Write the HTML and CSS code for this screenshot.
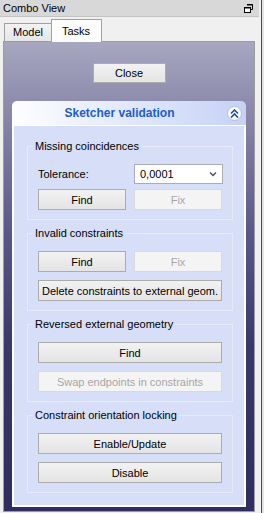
FILE: index.html
```html
<!DOCTYPE html>
<html lang="en">
    <head>
        <meta charset="UTF-8" />
        <title>Combo View</title>
        <link rel="stylesheet" href="styles.css">
    </head>
    <body>

        <div class="dock">
            <div class="dock-title">
                <span>Combo View</span>
                <svg class="float-icon" width="9" height="9" viewBox="0 0 9 9">
                    <path d="M3 0.5 H8.5 V5.5 H6.5" fill="none" stroke="#000" stroke-width="1" />
                    <path d="M3 1 H8.5" stroke="#000" stroke-width="1" />
                    <rect x="0.5" y="3.5" width="6" height="5" fill="#fff" stroke="#000" stroke-width="1" />
                    <path d="M0.5 4 H6.5" stroke="#000" stroke-width="1" />
                </svg>
            </div>

            <div class="tabs">
                <div class="tab">Model</div>
                <div class="tab active">Tasks</div>
            </div>

            <div class="tab-panel">
                <div class="close-row">
                    <button class="btn close-btn">Close</button>
                </div>

                <div class="taskbox">
                    <div class="taskbox-header">
                        <span class="taskbox-title">Sketcher validation</span>
                        <span class="collapse">
                            <svg width="9" height="9" viewBox="0 0 9 9">
                                <path d="M1 4.5 L4.5 1 L8 4.5" fill="none" stroke="#1f4aa6" stroke-width="1.6" />
                                <path d="M1 8.5 L4.5 5 L8 8.5" fill="none" stroke="#1f4aa6" stroke-width="1.6" />
                            </svg>
                        </span>
                    </div>

                    <div class="taskbox-body">
                        <fieldset class="group">
                            <legend>Missing coincidences</legend>
                            <div class="row tolerance-row">
                                <label>Tolerance:</label>
                                <div class="combo">
                                    <span>0,0001</span>
                                    <svg width="8" height="6" viewBox="0 0 8 6">
                                        <path d="M1 1.5 L4 4.5 L7 1.5" fill="none" stroke="#4a4a4a" stroke-width="1.3" />
                                    </svg>
                                </div>
                            </div>
                            <div class="row">
                                <button class="btn">Find</button>
                                <button class="btn" disabled>Fix</button>
                            </div>
                        </fieldset>

                        <fieldset class="group">
                            <legend>Invalid constraints</legend>
                            <div class="row">
                                <button class="btn">Find</button>
                                <button class="btn" disabled>Fix</button>
                            </div>
                            <button class="btn wide">Delete constraints to external geom.</button>
                        </fieldset>

                        <fieldset class="group">
                            <legend>Reversed external geometry</legend>
                            <button class="btn wide">Find</button>
                            <button class="btn wide" disabled>Swap endpoints in constraints</button>
                        </fieldset>

                        <fieldset class="group">
                            <legend>Constraint orientation locking</legend>
                            <button class="btn wide">Enable/Update</button>
                            <button class="btn wide">Disable</button>
                        </fieldset>
                    </div>
                </div>
            </div>
        </div>

        <div class="side"></div>

    </body>
</html>
```

FILE: styles.css
```css
body {
    margin: 0;
    width: 264px;
    height: 513px;
    overflow: hidden;
    display: flex;
    background-color: #f0f0f0;
    font-family: "Liberation Sans", Arial, sans-serif;
    font-size: 11px;
    line-height: 13px;
    color: #000;
}

.dock {
    width: 259px;
    display: flex;
    flex-direction: column;
}

.side {
    width: 2px;
    margin-left: 2px;
    border-left: 1px solid #46447a;
    background-color: #e4e4e4;
}

.dock-title {
    height: 16px;
    display: flex;
    align-items: center;
    justify-content: space-between;
    padding: 0 6px 0 3px;
    background-color: #d8d8d8;
    border-bottom: 1px solid #c4c4c4;
}

.tabs {
    height: 24px;
    display: flex;
    align-items: flex-end;
    padding-left: 4px;
    position: relative;
    z-index: 1;
}

.tab {
    height: 15px;
    padding: 2px 8px 0;
    border: 1px solid #a0a0a0;
    border-bottom: none;
    background: linear-gradient(#f3f3f3, #e6e6e6);
}

.tab.active {
    height: 17px;
    padding: 5px 11px 0 10px;
    margin-left: -1px;
    margin-bottom: -1px;
    background: #fcfcfc;
}

.tab-panel {
    margin-left: 3px;
    width: 252px;
    height: 471px;
    box-sizing: border-box;
    border: 1px solid #9c9c9c;
    background: linear-gradient(#a7a7bf 0%, #8a87aa 15%, #5b5989 40%, #3a3869 65%, #2e2d5e 100%);
}

.close-row {
    display: flex;
    justify-content: center;
    padding-top: 21px;
}

.btn {
    height: 21px;
    padding: 0;
    border: 1px solid #acacac;
    border-radius: 0;
    background: linear-gradient(#f2f2f2, #e4e4e4);
    font-family: inherit;
    font-size: 11px;
    font-weight: normal;
    color: #000;
}

.btn:disabled {
    border-color: #d9d9d9;
    background: #f4f4f4;
    color: #a6a6a6;
}

.close-btn {
    width: 73px;
    height: 20px;
}

.taskbox {
    margin: 18px 8px 0;
}

.taskbox-header {
    height: 24px;
    display: flex;
    align-items: center;
    border-radius: 5px 5px 0 0;
    border-bottom: 1px solid #fff;
    background: linear-gradient(to right, #fefeff, #c5d2f6);
}

.taskbox-title {
    flex: 1;
    text-align: center;
    font-weight: bold;
    font-size: 12px;
    color: #215dc6;
}

.collapse {
    width: 13px;
    height: 13px;
    margin-right: 4px;
    display: flex;
    align-items: center;
    justify-content: center;
    border: 1px solid #b4bfdc;
    border-radius: 50%;
    background: radial-gradient(circle at 40% 35%, #fff 55%, #e4e9f6);
}

.taskbox-body {
    padding: 14px 0 12px;
    border: 2px solid #fff;
    border-top: none;
    background-color: #d6dff7;
    display: flex;
    flex-direction: column;
    gap: 7px;
}

.group {
    margin: 0 11px 0 13px;
    padding: 11px 10px 9px;
    border: 1px solid #e6eaf7;
    display: flex;
    flex-direction: column;
    gap: 8px;
}

.group legend {
    padding: 0 2px;
    margin-left: -5px;
}

.row {
    display: grid;
    grid-template-columns: 1fr 1fr;
    gap: 8px;
}

.tolerance-row {
    align-items: center;
    margin-bottom: -3px;
}

.combo {
    height: 20px;
    box-sizing: border-box;
    display: flex;
    align-items: center;
    justify-content: space-between;
    padding: 0 5px 0 5px;
    margin-right: -1px;
    border: 1px solid #abadb3;
    background-color: #fff;
}

.wide {
    width: 100%;
}
```
